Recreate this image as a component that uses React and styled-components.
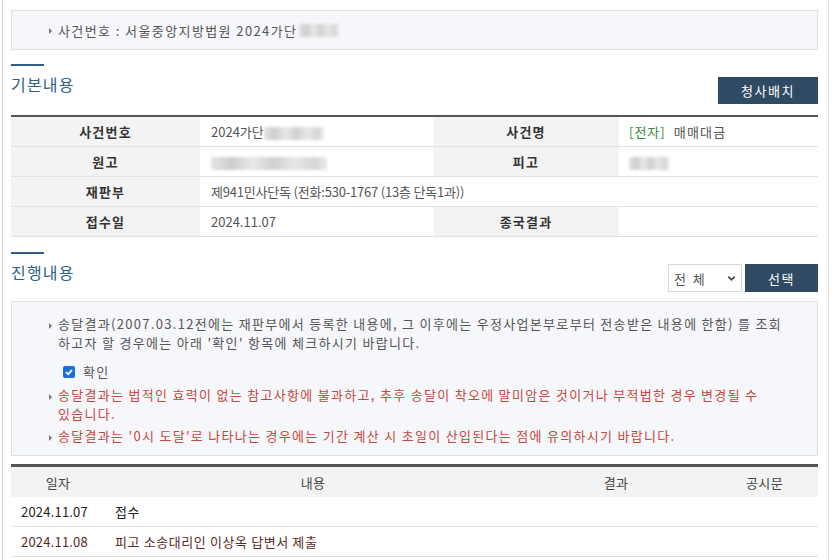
import React from 'react';
import styled, { createGlobalStyle } from 'styled-components';

const GlobalStyle = createGlobalStyle`
    html, body {
        margin: 0;
        padding: 0;
        background: #ffffff;
        font-family: "Noto Sans CJK KR", "Noto Sans", sans-serif;
        color: #333;
    }
`;

const Page = styled.div`
    margin-left: 2px;
    width: 807px;
    min-height: 560px;
    padding: 10px 10px 0 8px;
    border-left: 1px solid #d6d6d6;
    border-right: 1px solid #e4e4e4;
`;

const CaseBox = styled.div`
    height: 38px;
    display: flex;
    align-items: center;
    padding-left: 37px;
    background: #f6f7fa;
    border: 1px solid #dde0e6;
    font-size: 13px;
    letter-spacing: 1.4px;
    color: #555;
`;

const Bullet = styled.span`
    display: inline-block;
    width: 0;
    height: 0;
    border-left: 3px solid ${({color}) => color || "#777"};
    border-top: 3px solid transparent;
    border-bottom: 3px solid transparent;
    margin-right: 6px;
    vertical-align: middle;
    position: relative;
    top: 1px;
`;

const Blur = styled.span`
    display: inline-block;
    width: ${({w}) => w || "60px"};
    height: 13px;
    margin-left: ${({ml}) => ml || "0"};
    vertical-align: middle;
    background: linear-gradient(90deg, #e4e4e4 0%, #cdcdcd 18%, #e8e8e8 36%, #d0d0d0 54%, #e6e6e6 72%, #d6d6d6 90%, #ececec 100%);
    filter: blur(1.5px);
`;

const SectionHead = styled.div`
    display: flex;
    justify-content: space-between;
    align-items: flex-start;
    margin-top: ${({mt}) => mt || "14px"};
    margin-bottom: ${({mb}) => mb || "11px"};
`;

const Title = styled.h2`
    margin: 0;
    font-size: 16px;
    font-weight: 400;
    letter-spacing: 1.2px;
    color: #2c6287;
    line-height: 22px;
    padding-top: 9px;
    position: relative;
    &::before {
        content: "";
        position: absolute;
        left: 0;
        top: 0;
        width: 33px;
        height: 2px;
        background: #2c5f86;
    }
`;

const DarkButton = styled.button`
    height: ${({h}) => h || "27px"};
    width: ${({w}) => w || "100px"};
    margin-top: ${({mt}) => mt || "0"};
    border: none;
    background: #2f4a63;
    color: #fff;
    font-family: inherit;
    font-size: 13px;
    letter-spacing: 1.5px;
    padding: 0;
`;

const InfoTable = styled.table`
    width: 100%;
    border-collapse: collapse;
    border-top: 2px solid #555;
    font-size: 13px;
    table-layout: fixed;
`;

const Th = styled.th`
    background: #f3f3f3;
    font-weight: 600;
    letter-spacing: 1.2px;
    color: #333;
    height: 29px;
    padding: 0;
    border-bottom: 1px solid #e2e2e2;
    text-align: center;
    width: ${({w}) => w || "auto"};
`;

const Td = styled.td`
    height: 29px;
    padding: 0 ${({pl}) => pl || "11px"};
    border-bottom: 1px solid #e2e2e2;
    color: #555;
    white-space: nowrap;
    letter-spacing: ${({ls}) => ls || "0"};
    width: ${({w}) => w || "auto"};
`;

const Green = styled.span`
    color: #3d8b3d;
    margin-right: 8px;
    letter-spacing: 1px;
`;

const Wide = styled.span`
    letter-spacing: 1.2px;
`;

const Controls = styled.div`
    display: flex;
    gap: 3px;
    margin-top: 12px;
`;

const Select = styled.div`
    width: 62px;
    height: 26px;
    border: 1px solid #d8d8d8;
    display: flex;
    align-items: center;
    justify-content: space-between;
    padding: 0 5px;
    font-size: 13px;
    color: #555;
    span {
        letter-spacing: 2px;
    }
    svg {
        width: 9px;
        height: 9px;
    }
`;

const Notice = styled.div`
    background: #f6f7fa;
    border: 1px solid #dde0e6;
    padding: 12px 28px 10px 37px;
    font-size: 13px;
    line-height: 19px;
    color: #555;
`;

const NoticeLine = styled.p`
    margin: 0;
    color: ${({red}) => red ? "#c8473c" : "#555"};
    letter-spacing: 1.3px;
    word-break: ${({keep}) => keep ? "keep-all" : "normal"};
    margin-top: ${({mt}) => mt || "0"};
    padding-left: 9px;
    text-indent: -9px;
`;

const CheckRow = styled.label`
    display: flex;
    align-items: center;
    gap: 8px;
    height: 19px;
    margin: 10px 0 4px 14px;
    letter-spacing: 1.3px;
    color: #555;
`;

const CheckBox = styled.span`
    width: 12px;
    height: 12px;
    border-radius: 2px;
    background: #1a6fe0;
    display: inline-flex;
    align-items: center;
    justify-content: center;
    svg {
        width: 10px;
        height: 10px;
    }
`;

const ProgressTable = styled.table`
    width: 100%;
    margin-top: 8px;
    border-collapse: collapse;
    border-top: 3px solid #555;
    font-size: 13px;
    table-layout: fixed;
`;

const PHead = styled.th`
    background: #f3f3f3;
    font-weight: 400;
    color: #444;
    height: 30px;
    padding: 0;
    text-align: center;
    letter-spacing: 0.3px;
    width: ${({w}) => w || "auto"};
`;

const PCell = styled.td`
    height: 29px;
    padding: 0 0 0 ${({pl}) => pl || "0"};
    border-bottom: 1px solid #e2e2e2;
    color: ${({dim}) => dim ? "#5a2a26" : "#222"};
    white-space: nowrap;
    letter-spacing: ${({ls}) => ls || "0.6px"};
`;

const App = () => {
    return (
        <>
            <GlobalStyle />
            <Page>
                <CaseBox>
                    <Bullet />
                    사건번호 : 서울중앙지방법원 2024가단<Blur w="40px" ml="2px" />
                </CaseBox>

                <SectionHead>
                    <Title>기본내용</Title>
                    <DarkButton mt="13px">청사배치</DarkButton>
                </SectionHead>

                <InfoTable>
                    <tbody>
                        <tr>
                            <Th w="189px">사건번호</Th>
                            <Td w="211px">2024가단<Blur w="60px" /></Td>
                            <Th w="186px">사건명</Th>
                            <Td pl="10px"><Green>[전자]</Green><Wide>매매대금</Wide></Td>
                        </tr>
                        <tr>
                            <Th>원고</Th>
                            <Td><Blur w="116px" /></Td>
                            <Th>피고</Th>
                            <Td pl="10px"><Blur w="40px" /></Td>
                        </tr>
                        <tr>
                            <Th>재판부</Th>
                            <Td colSpan={3} ls="-0.2px">제941민사단독 (전화:530-1767 (13층 단독1과))</Td>
                        </tr>
                        <tr>
                            <Th>접수일</Th>
                            <Td>2024.11.07</Td>
                            <Th>종국결과</Th>
                            <Td></Td>
                        </tr>
                    </tbody>
                </InfoTable>

                <SectionHead mt="15px" mb="9px">
                    <Title>진행내용</Title>
                    <Controls>
                        <Select>
                            <span>전 체</span>
                            <svg viewBox="0 0 10 10"><path d="M1.5 3 L5 6.5 L8.5 3" stroke="#444" strokeWidth="2" fill="none" /></svg>
                        </Select>
                        <DarkButton w="73px" h="28px">선택</DarkButton>
                    </Controls>
                </SectionHead>

                <Notice>
                    <NoticeLine><Bullet />송달결과(2007.03.12전에는 재판부에서 등록한 내용에, 그 이후에는 우정사업본부로부터 전송받은 내용에 한함) 를 조회하고자 할 경우에는 아래 '확인' 항목에 체크하시기 바랍니다.</NoticeLine>
                    <CheckRow>
                        <CheckBox>
                            <svg viewBox="0 0 10 10"><path d="M2 5.2 L4.2 7.3 L8 2.8" stroke="#fff" strokeWidth="1.8" fill="none" /></svg>
                        </CheckBox>
                        확인
                    </CheckRow>
                    <NoticeLine red keep><Bullet />송달결과는 법적인 효력이 없는 참고사항에 불과하고, 추후 송달이 착오에 말미암은 것이거나 부적법한 경우 변경될 수 있습니다.</NoticeLine>
                    <NoticeLine red keep mt="3px"><Bullet />송달결과는 '0시 도달'로 나타나는 경우에는 기간 계산 시 초일이 산입된다는 점에 유의하시기 바랍니다.</NoticeLine>
                </Notice>

                <ProgressTable>
                    <thead>
                        <tr>
                            <PHead w="94px">일자</PHead>
                            <PHead>내용</PHead>
                            <PHead w="190px">결과</PHead>
                            <PHead w="107px">공시문</PHead>
                        </tr>
                    </thead>
                    <tbody>
                        <tr>
                            <PCell pl="10px" ls="0.2px">2024.11.07</PCell>
                            <PCell pl="10px">접수</PCell>
                            <PCell></PCell>
                            <PCell></PCell>
                        </tr>
                        <tr>
                            <PCell pl="10px" ls="0.2px" dim>2024.11.08</PCell>
                            <PCell pl="10px" dim>피고 소송대리인 이상옥 답변서 제출</PCell>
                            <PCell></PCell>
                            <PCell></PCell>
                        </tr>
                    </tbody>
                </ProgressTable>
            </Page>
        </>
    );
}

export default App;
